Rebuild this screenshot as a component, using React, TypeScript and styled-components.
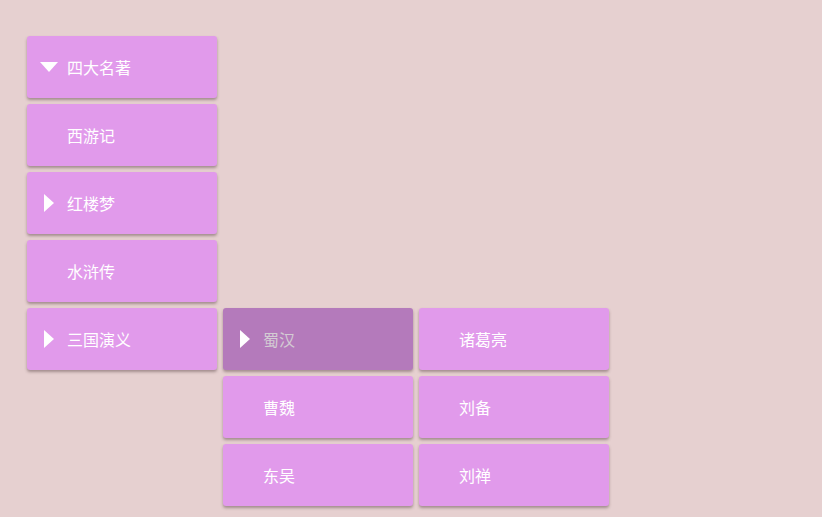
import { ReactElement } from 'react';
import styled, { createGlobalStyle, css } from 'styled-components';

type Node = {
  label: string;
  expanded?: boolean;
  open?: boolean;
  active?: boolean;
  children?: Node[];
};

const tree: Node = {
  label: '四大名著',
  expanded: true,
  children: [
    { label: '西游记' },
    { label: '红楼梦', children: [{ label: '贾宝玉' }, { label: '林黛玉' }] },
    { label: '水浒传' },
    {
      label: '三国演义',
      open: true,
      children: [
        {
          label: '蜀汉',
          active: true,
          open: true,
          children: [{ label: '诸葛亮' }, { label: '刘备' }, { label: '刘禅' }],
        },
        { label: '曹魏' },
        { label: '东吴' },
      ],
    },
  ],
};

const GlobalStyle = createGlobalStyle`
  html, body {
    margin: 0;
    padding: 0;
    background: #e6d0d0;
    font-family: "Noto Sans CJK SC", "Noto Sans", sans-serif;
  }
`;

const Styled = {
  Page: styled.div`
    min-height: 517px;
    padding: 36px 0 0 27px;
    box-sizing: border-box;
  `,
  Column: styled.ul`
    list-style: none;
    margin: 0;
    padding: 0;
    width: 190px;
    display: flex;
    flex-direction: column;
    gap: 6px;
  `,
  Entry: styled.li`
    position: relative;
  `,
  Item: styled.div<{ $active?: boolean }>`
    height: 62px;
    display: flex;
    align-items: center;
    gap: 9px;
    padding-left: 12px;
    border-radius: 3px;
    background: ${({ $active }) => ($active ? '#b47abb' : '#e19aeb')};
    color: ${({ $active }) => ($active ? '#d3cbd3' : '#ffffff')};
    font-size: 16px;
    box-shadow: 0 2px 3px rgba(80, 60, 60, 0.45);
    cursor: pointer;
  `,
  Icon: styled.span`
    width: 19px;
    display: flex;
    justify-content: center;
    align-items: center;
  `,
  Arrow: styled.span<{ $down?: boolean }>`
    width: 0;
    height: 0;
    ${({ $down }) =>
      $down
        ? css`
            border-left: 9.5px solid transparent;
            border-right: 9.5px solid transparent;
            border-top: 10px solid #ffffff;
          `
        : css`
            border-top: 9.5px solid transparent;
            border-bottom: 9.5px solid transparent;
            border-left: 10px solid #ffffff;
          `}
  `,
  Submenu: styled.div`
    position: absolute;
    top: 0;
    left: calc(100% + 6px);
  `,
};

const MenuItem = ({ node }: { node: Node }): ReactElement => {
  const hasChildren = !!node.children?.length;
  return (
    <Styled.Item $active={node.active}>
      <Styled.Icon>
        {hasChildren && <Styled.Arrow $down={node.expanded} />}
      </Styled.Icon>
      <span>{node.label}</span>
    </Styled.Item>
  );
};

const Menu = ({ nodes }: { nodes: Node[] }): ReactElement => (
  <Styled.Column>
    {nodes.map((node) => (
      <Styled.Entry key={node.label}>
        <MenuItem node={node} />
        {node.open && node.children && (
          <Styled.Submenu>
            <Menu nodes={node.children} />
          </Styled.Submenu>
        )}
      </Styled.Entry>
    ))}
  </Styled.Column>
);

export default function App(): ReactElement {
  return (
    <>
      <GlobalStyle />
      <Styled.Page>
        <Menu nodes={[tree, ...(tree.expanded ? tree.children ?? [] : [])]} />
      </Styled.Page>
    </>
  );
}
